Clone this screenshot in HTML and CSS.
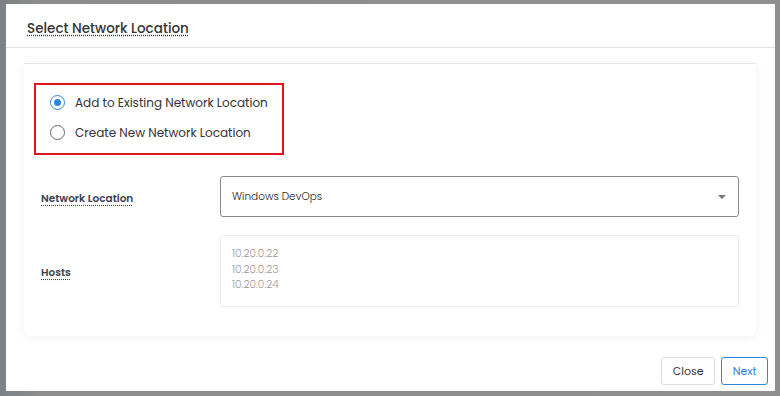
FILE: index.html
```html
<!DOCTYPE html>
<html>
  <head>
    <meta charset="utf-8"/>
    <title>Select Network Location</title>
    <link rel="stylesheet" href="styles.css">
  </head>
  <body>
    <div class="modal">
      <div class="modal-header">
        <h1 class="title">Select Network Location</h1>
      </div>
      <div class="modal-body">
        <div class="card">
          <div class="choice">
            <label class="radio">
              <span class="dot checked"></span>
              Add to Existing Network Location
            </label>
            <label class="radio">
              <span class="dot"></span>
              Create New Network Location
            </label>
          </div>
          <div class="row">
            <span class="label">Network Location</span>
            <div class="select">
              <span>Windows DevOps</span>
              <span class="caret"></span>
            </div>
          </div>
          <div class="row">
            <span class="label">Hosts</span>
            <div class="hosts">10.20.0.22<br>10.20.0.23<br>10.20.0.24</div>
          </div>
        </div>
      </div>
      <div class="modal-footer">
        <button class="btn">Close</button>
        <button class="btn primary">Next</button>
      </div>
    </div>
  </body>
</html>
```

FILE: styles.css
```css
* {
  margin: 0;
  padding: 0;
  box-sizing: border-box;
}

html {
  font-family: Poppins, Inter, 'Open Sans', sans-serif;
  color: #333;
}

body {
  height: 396px;
  overflow: hidden;
  background: linear-gradient(to right, #7c8186 0, #8d8d8d 40px, #8f8f8f 100%);
  padding: 4px 5px 5px 6px;
}

.modal {
  height: 387px;
  background: #fff;
  display: flex;
  flex-direction: column;
}

.modal-header {
  height: 44px;
  border-bottom: 1px solid #e2e2e2;
  padding: 0 21px;
  display: flex;
  align-items: center;
}

.title {
  font-size: 13.5px;
  font-weight: 500;
  color: #333;
  text-decoration: underline dotted #333;
  text-underline-offset: 2px;
  margin-top: 6px;
}

.modal-body {
  padding: 15px 19px 0 18px;
}

.card {
  height: 273px;
  border-top: 1px solid #e6e6e6;
  border-radius: 0 0 6px 6px;
  box-shadow: 0 2px 10px rgba(0, 0, 0, 0.06);
  padding: 19px 17px 0 10px;
}

.choice {
  width: 250px;
  height: 72px;
  border: 2px solid #e0161f;
  padding: 8px 0 0 14px;
  display: flex;
  flex-direction: column;
  gap: 11px;
}

.radio {
  display: flex;
  align-items: center;
  gap: 10px;
  font-size: 12px;
  color: #333;
  height: 19px;
}

.dot {
  width: 15px;
  height: 15px;
  border: 1px solid #666;
  border-radius: 50%;
  display: flex;
  align-items: center;
  justify-content: center;
}

.dot.checked {
  border-color: #2f86e0;
}

.dot.checked::after {
  content: "";
  width: 7px;
  height: 7px;
  border-radius: 50%;
  background: #2f86e0;
}

.row {
  display: flex;
  align-items: center;
  margin-top: 21px;
}

.row + .row {
  margin-top: 18px;
}

.label {
  width: 186px;
  padding: 4px 0 0 7px;
  font-size: 10.5px;
  font-weight: 600;
  color: #3b4351;
  text-decoration: underline dotted #3b4351;
  text-underline-offset: 3px;
}

.select {
  flex: 1;
  height: 41px;
  border: 1px solid #8a8a8a;
  border-radius: 3px;
  padding: 0 12px 0 11px;
  display: flex;
  align-items: center;
  justify-content: space-between;
  font-size: 10.5px;
  font-weight: 300;
  color: #222;
}

.caret {
  width: 0;
  height: 0;
  border-left: 4px solid transparent;
  border-right: 4px solid transparent;
  border-top: 4px solid #777;
}

.hosts {
  flex: 1;
  height: 72px;
  border: 1px solid #ececec;
  border-radius: 3px;
  padding: 10px 11px;
  font-size: 10.5px;
  font-weight: 300;
  line-height: 15.5px;
  color: #999;
}

.modal-footer {
  margin-top: auto;
  display: flex;
  justify-content: flex-end;
  gap: 6px;
  padding: 0 7px 6px 0;
}

.btn {
  height: 28px;
  padding: 0 10.5px;
  font-family: inherit;
  font-size: 11px;
  background: #fff;
  color: #333;
  border: 1px solid #dcdcdc;
  border-radius: 3px;
}

.btn.primary {
  color: #2f86e0;
  border-color: #2f86e0;
}
```
